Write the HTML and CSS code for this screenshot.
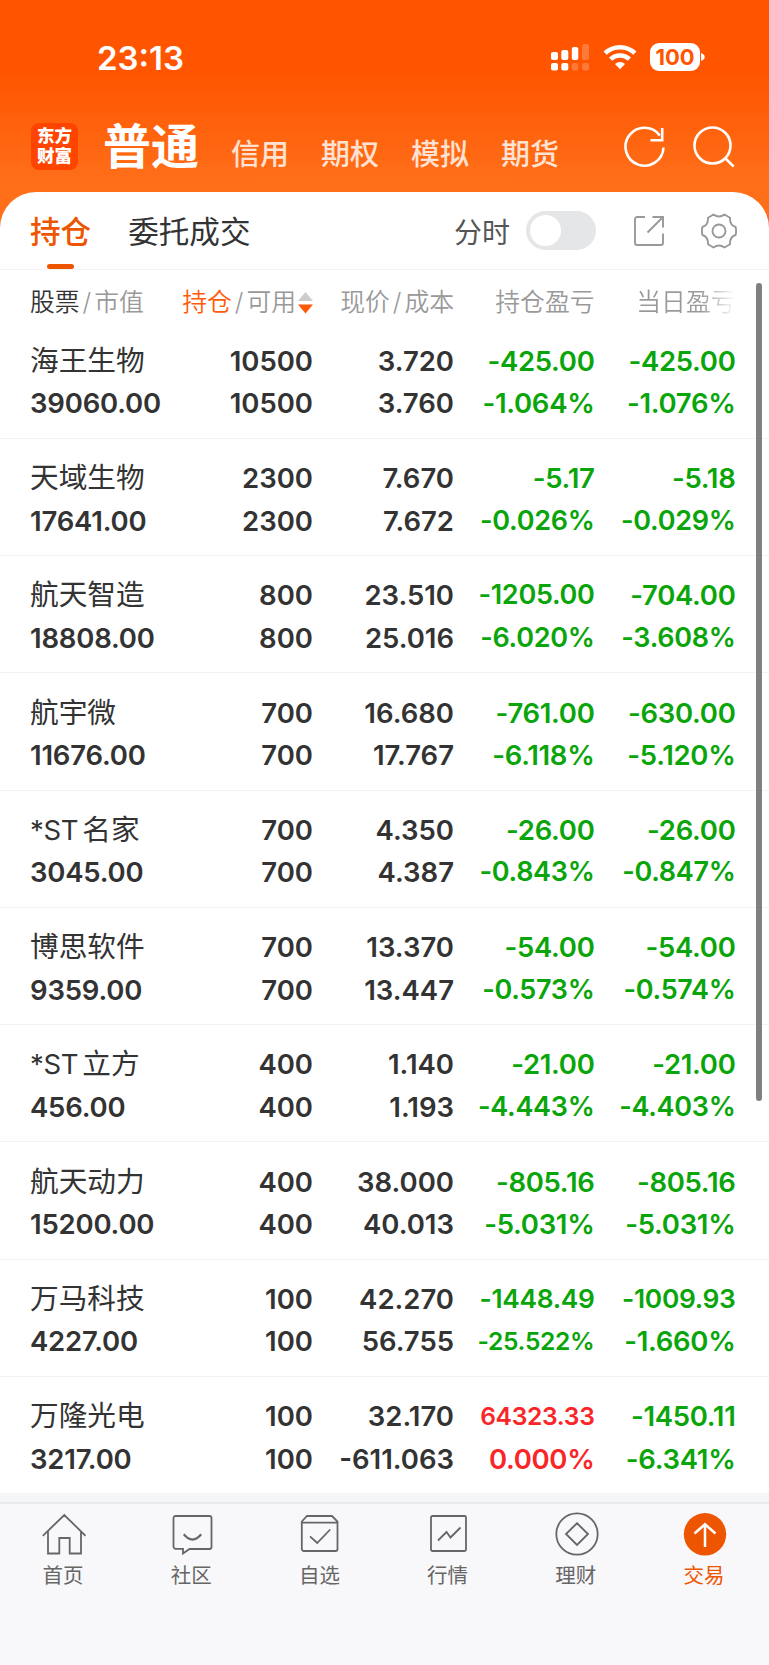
FILE: index.html
```
<!DOCTYPE html>
<html lang="zh-CN">
<head>
    <meta charset="UTF-8">
    <meta name="viewport" content="width=device-width, initial-scale=1.0">
    <title>持仓</title>
    <link rel="stylesheet" href="styles.css">
</head>
<body>
    <header class="top">
        <div class="status">
            <span class="time">23:13</span>
            <svg class="signal" width="38" height="28" viewBox="0 0 38 28" fill="#fff">
                <rect x="0" y="9" width="7" height="8" rx="2"/>
                <rect x="10.3" y="7" width="7" height="10" rx="2"/>
                <rect x="20.8" y="4" width="6.5" height="13" rx="2"/>
                <rect x="31" y="1" width="7" height="16" rx="2" opacity=".22"/>
                <rect x="0" y="20" width="7" height="7.5" rx="2"/>
                <rect x="10.3" y="20" width="7" height="7.5" rx="2"/>
                <rect x="20.8" y="20" width="6.5" height="7.5" rx="2" opacity=".22"/>
                <rect x="31" y="20" width="7" height="7.5" rx="2" opacity=".22"/>
            </svg>
            <svg class="wifi" width="34" height="26" viewBox="0 0 34 26">
                <g fill="none" stroke="#fff" stroke-width="4.6">
                    <path d="M2.1 9.2a21.6 21.6 0 0 1 29.8 0"/>
                    <path d="M7.6 15.2a13.6 13.6 0 0 1 18.8 0"/>
                </g>
                <path fill="#fff" d="M17 25.2l-5-5.2a7.2 7.2 0 0 1 10 0z"/>
            </svg>
            <span class="battery">100</span>
            <svg class="battery-tip" width="4" height="8" viewBox="0 0 4 8"><path fill="#fff" d="M0 0c5 1.5 5 6.5 0 8z"/></svg>
        </div>
        <nav class="accounts">
            <div class="logo">东方<br>财富</div>
            <span class="account-on">普通</span>
            <span class="account">信用</span>
            <span class="account">期权</span>
            <span class="account">模拟</span>
            <span class="account">期货</span>
            <svg class="refresh" width="42" height="42" viewBox="0 0 42 42" fill="none" stroke="#fff" stroke-width="2.6">
                <path d="M39.500 21.500a19 19 0 1 1-3.700-12.100"/>
                <path d="M38.200 2v12.300H26.500"/>
            </svg>
            <svg class="search" width="42" height="42" viewBox="0 0 42 42" fill="none" stroke="#fff" stroke-width="2.6">
                <circle cx="19.5" cy="19.5" r="18"/>
                <path d="M32 32l8.7 8.7"/>
            </svg>
        </nav>
    </header>

    <main class="card">
        <div class="tabs">
            <span class="tab tab-on">持仓</span>
            <span class="tab">委托成交</span>
            <span class="switch-label">分时</span>
            <span class="switch"></span>
            <svg class="share" width="30" height="30" viewBox="0 0 30 30" fill="none" stroke="#999" stroke-width="1.9">
                <path d="M11 1H3a2 2 0 0 0-2 2v24a2 2 0 0 0 2 2h24a2 2 0 0 0 2-2v-9.500M18.500 1H29v10.500M29 1L13.500 16.500"/>
            </svg>
            <svg class="gear" width="36" height="36" viewBox="0 0 36 36" fill="none" stroke="#999" stroke-width="1.9">
                <path d="M12.500 1.500Q18 5.500 23.500 1.500L29 4.800Q28.600 12 34.600 14Q35.600 18 34.600 22Q28.600 24 29 31.200L23.500 34.500Q18 30.500 12.500 34.500L7 31.200Q7.400 24 1.400 22Q.4 18 1.400 14Q7.400 12 7 4.800Z" stroke-linejoin="round"/>
                <circle cx="18" cy="18" r="6.5"/>
            </svg>
        </div>

        <div class="grid head">
            <span class="left"><b>股票</b><i>/</i>市值</span>
            <span class="sort"><em>持仓</em><i>/</i>可用<svg width="15" height="22" viewBox="0 0 15 22"><path fill="#ccc" d="M7.500 0L15 9H0z"/><path fill="#ff5a0a" d="M0 12.500h15L7.500 21.500z"/></svg></span>
            <span>现价<i>/</i>成本</span>
            <span>持仓盈亏</span>
            <span class="fade">当日盈亏</span>
        </div>

        <div class="grid row">
            <div class="left"><span class="name">海王生物</span><span>39060.00</span></div>
            <div><span>10500</span><span>10500</span></div>
            <div><span>3.720</span><span>3.760</span></div>
            <div class="down"><span>-425.00</span><span>-1.064%</span></div>
            <div class="down"><span>-425.00</span><span>-1.076%</span></div>
        </div>
        <div class="grid row">
            <div class="left"><span class="name">天域生物</span><span>17641.00</span></div>
            <div><span>2300</span><span>2300</span></div>
            <div><span>7.670</span><span>7.672</span></div>
            <div class="down"><span>-5.17</span><span class="fit">-0.026%</span></div>
            <div class="down"><span>-5.18</span><span class="fit">-0.029%</span></div>
        </div>
        <div class="grid row">
            <div class="left"><span class="name">航天智造</span><span>18808.00</span></div>
            <div><span>800</span><span>800</span></div>
            <div><span>23.510</span><span>25.016</span></div>
            <div class="down"><span class="fit">-1205.00</span><span class="fit">-6.020%</span></div>
            <div class="down"><span>-704.00</span><span class="fit">-3.608%</span></div>
        </div>
        <div class="grid row">
            <div class="left"><span class="name">航宇微</span><span>11676.00</span></div>
            <div><span>700</span><span>700</span></div>
            <div><span>16.680</span><span>17.767</span></div>
            <div class="down"><span>-761.00</span><span>-6.118%</span></div>
            <div class="down"><span>-630.00</span><span>-5.120%</span></div>
        </div>
        <div class="grid row">
            <div class="left"><span class="name"><u>*ST</u>名家</span><span>3045.00</span></div>
            <div><span>700</span><span>700</span></div>
            <div><span>4.350</span><span>4.387</span></div>
            <div class="down"><span>-26.00</span><span class="fit">-0.843%</span></div>
            <div class="down"><span>-26.00</span><span class="fit">-0.847%</span></div>
        </div>
        <div class="grid row">
            <div class="left"><span class="name">博思软件</span><span>9359.00</span></div>
            <div><span>700</span><span>700</span></div>
            <div><span>13.370</span><span>13.447</span></div>
            <div class="down"><span>-54.00</span><span class="fit">-0.573%</span></div>
            <div class="down"><span>-54.00</span><span class="fit">-0.574%</span></div>
        </div>
        <div class="grid row">
            <div class="left"><span class="name"><u>*ST</u>立方</span><span>456.00</span></div>
            <div><span>400</span><span>400</span></div>
            <div><span>1.140</span><span>1.193</span></div>
            <div class="down"><span>-21.00</span><span class="fit">-4.443%</span></div>
            <div class="down"><span>-21.00</span><span class="fit">-4.403%</span></div>
        </div>
        <div class="grid row">
            <div class="left"><span class="name">航天动力</span><span>15200.00</span></div>
            <div><span>400</span><span>400</span></div>
            <div><span>38.000</span><span>40.013</span></div>
            <div class="down"><span>-805.16</span><span>-5.031%</span></div>
            <div class="down"><span>-805.16</span><span>-5.031%</span></div>
        </div>
        <div class="grid row">
            <div class="left"><span class="name">万马科技</span><span>4227.00</span></div>
            <div><span>100</span><span>100</span></div>
            <div><span>42.270</span><span>56.755</span></div>
            <div class="down"><span class="fit-sm">-1448.49</span><span class="fit-xs">-25.522%</span></div>
            <div class="down"><span class="fit-sm">-1009.93</span><span>-1.660%</span></div>
        </div>
        <div class="grid row">
            <div class="left"><span class="name">万隆光电</span><span>3217.00</span></div>
            <div><span>100</span><span>100</span></div>
            <div><span>32.170</span><span>-611.063</span></div>
            <div class="up"><span class="fit-xs">64323.33</span><span>0.000%</span></div>
            <div class="down"><span>-1450.11</span><span>-6.341%</span></div>
        </div>
        <div class="scrollbar"></div>
    </main>

    <footer class="nav">
        <div class="nav-item">
            <svg width="44" height="44" viewBox="0 0 44 44"><path d="M.8 23.800L22.300 3l21.200 20.800M6 19.500v22h11.300V26h10.400v15.500H39v-22"/></svg>
            <span>首页</span>
        </div>
        <div class="nav-item">
            <svg width="44" height="44" viewBox="0 0 44 44"><path d="M5.500 4h34a2 2 0 0 1 2 2v29a2 2 0 0 1-2 2H19.500L13 41.500V36.800H5.500a2 2 0 0 1-2-2V6a2 2 0 0 1 2-2z"/><path d="M13.800 22.300q8.700 10.600 17.400 0" stroke-width="2.2"/></svg>
            <span>社区</span>
        </div>
        <div class="nav-item">
            <svg width="44" height="44" viewBox="0 0 44 44"><path d="M3.800 9.500L9 4h25l5.500 5.500v27.500a2 2 0 0 1-2 2h-31.700a2 2 0 0 1-2-2zM3.800 10.600h35.700"/><path d="M12 24.300l7.200 6.700 13-13.500"/></svg>
            <span>自选</span>
        </div>
        <div class="nav-item">
            <svg width="44" height="44" viewBox="0 0 44 44"><rect x="4" y="4" width="35" height="35" rx="1.5"/><path d="M11 28.500l8.500-8.500 4 5.500 10-10"/></svg>
            <span>行情</span>
        </div>
        <div class="nav-item">
            <svg width="44" height="44" viewBox="0 0 44 44"><circle cx="22" cy="22" r="20.7"/><path d="M22 11.200L33 22 22 33 11 22z"/></svg>
            <span>理财</span>
        </div>
        <div class="nav-item nav-on">
            <svg width="44" height="44" viewBox="0 0 44 44"><circle cx="22" cy="22.3" r="21.2"/><path d="M22 35V12M11.500 21.500L22 12.200l10.500 9.300"/></svg>
            <span>交易</span>
        </div>
    </footer>
</body>
</html>
```

FILE: styles.css
```
* {
    box-sizing: border-box;
}
body {
    margin: 0;
    width: 769px;
    height: 1665px;
    overflow: hidden;
    font-family: Inter, "Noto Sans CJK SC", sans-serif;
    color: #333;
    background: #f8f8fa;
}
svg {
    display: block;
    flex: none;
}
i, em, b, u {
    font-style: normal;
    font-weight: inherit;
    text-decoration: none;
}

/* Topo laranja */
.top {
    height: 240px;
    background: linear-gradient(#ff5500 0, #ff5500 72px, #ff6f1a 185px);
    color: #fff;
}
.status {
    display: flex;
    align-items: center;
    height: 114px;
    padding-left: 97px;
}
.time {
    width: 454px;
    padding-top: 1px;
    font-size: 33px;
    font-weight: 600;
    line-height: 40px;
}
.wifi {
    margin-left: 14px;
}
.battery {
    width: 50px;
    height: 28px;
    margin-left: 13px;
    border-radius: 9px;
    background: #fff;
    color: #ff5500;
    font-size: 22px;
    font-weight: 700;
    line-height: 28px;
    text-align: center;
}
.battery-tip {
    margin-left: 1px;
}
.accounts {
    display: flex;
    height: 78px;
    padding-left: 31px;
    align-items: flex-start;
}
.logo {
    width: 47px;
    height: 47px;
    margin-top: 9px;
    padding-top: 3px;
    border-radius: 8px;
    background: #ff4400;
    font-size: 17.5px;
    font-weight: 900;
    line-height: 19.5px;
    text-align: center;
}
.account-on {
    margin: 3px 0 0 25px;
    font-size: 48px;
    font-weight: 700;
    line-height: 60px;
}
.account {
    margin: 21px 0 0 32px;
    font-size: 29px;
    font-weight: 500;
    line-height: 40px;
    color: #ffe2d1;
}
.refresh {
    margin: 12px 0 0 65px;
}
.search {
    margin: 12px 0 0 27px;
}

/* Lista */
.card {
    position: relative;
    height: 1301px;
    margin-top: -48px;
    border-radius: 36px 36px 0 0;
    background: #fff;
    overflow: hidden;
}
.tabs {
    display: flex;
    align-items: center;
    height: 78px;
    padding-left: 30px;
    border-bottom: 1px solid #f2f2f2;
}
.tab {
    position: relative;
    margin-right: 37px;
    padding-top: 1px;
    font-size: 30.6px;
    line-height: 77px;
}
.tab-on {
    color: #ee5500;
    font-weight: 500;
}
.tab-on::after {
    content: "";
    position: absolute;
    left: 17px;
    bottom: 1px;
    width: 27px;
    height: 5px;
    border-radius: 3px;
    background: #ee5500;
}
.switch-label {
    margin-left: auto;
    font-size: 28px;
    color: #555;
}
.switch {
    width: 70px;
    height: 39px;
    margin-left: 16px;
    padding: 4px;
    border-radius: 20px;
    background: #e5e6e8;
}
.switch::after {
    content: "";
    display: block;
    width: 31px;
    height: 31px;
    border-radius: 50%;
    background: #fff;
}
.share {
    margin-left: 38px;
}
.gear {
    margin: 0 32px 0 37px;
}
.grid {
    display: grid;
    grid-template-columns: 140px 143px 141px 140.5px 141px;
    padding-left: 30px;
    text-align: right;
    white-space: nowrap;
}
.grid .left {
    text-align: left;
}
.head {
    height: 51.5px;
    padding-top: 14px;
    font-size: 24.8px;
    font-weight: 350;
    line-height: 36px;
    color: #999;
}
.head i {
    margin: 0 3px;
}
.head b {
    color: #333;
}
.head em {
    color: #ff5a0a;
}
.sort {
    display: flex;
    justify-content: flex-end;
}
.sort svg {
    margin: 8px 0 0 2px;
}
.fade {
    background: linear-gradient(90deg, #999 75%, #fff);
    background-clip: text;
    color: transparent;
}
.row {
    height: 117.25px;
    padding-top: 18.4px;
    border-bottom: 1px solid #f2f2f2;
    font-size: 27.5px;
    font-weight: 600;
    line-height: 42.5px;
}
.row:nth-last-child(2) {
    border-bottom: none;
}
.row span {
    display: block;
    height: 42.5px;
}
.row .left {
    letter-spacing: -0.2px;
}
.row .name {
    font-size: 28.7px;
    font-weight: 400;
    letter-spacing: 0;
}
.row u {
    margin-right: 4px;
    font-size: 27.5px;
    letter-spacing: -0.3px;
}
.down, .up {
    letter-spacing: -0.3px;
}
.down {
    color: #0aa50a;
}
.up {
    color: #fa2528;
}
.row .fit {
    font-size: 27px;
}
.row .fit-sm {
    font-size: 26.3px;
}
.row .fit-xs {
    font-size: 24.6px;
}
.scrollbar {
    position: absolute;
    top: 91px;
    right: 7px;
    width: 6px;
    height: 818px;
    border-radius: 3px;
    background: #808080;
}

/* Menu inferior */
.nav {
    display: flex;
    height: 172px;
    padding-top: 8px;
    border-top: 2px solid #e9ebee;
    box-shadow: 0 -9px #f5f6f8;
    margin-top: 9px;
    background: #f8f8fa;
}
.nav-item {
    flex: 1;
    display: flex;
    flex-direction: column;
    align-items: center;
    font-size: 20.5px;
    line-height: 30px;
    color: #666;
}
.nav-item svg {
    fill: none;
    stroke: #666;
    stroke-width: 1.8;
}
.nav-item span {
    margin-top: 4.5px;
    padding-right: 2px;
}
.nav-on {
    color: #ee5500;
}
.nav-on circle {
    fill: #ee5500;
    stroke: none;
}
.nav-on path {
    stroke: #fff;
    stroke-width: 2.5;
}
```
